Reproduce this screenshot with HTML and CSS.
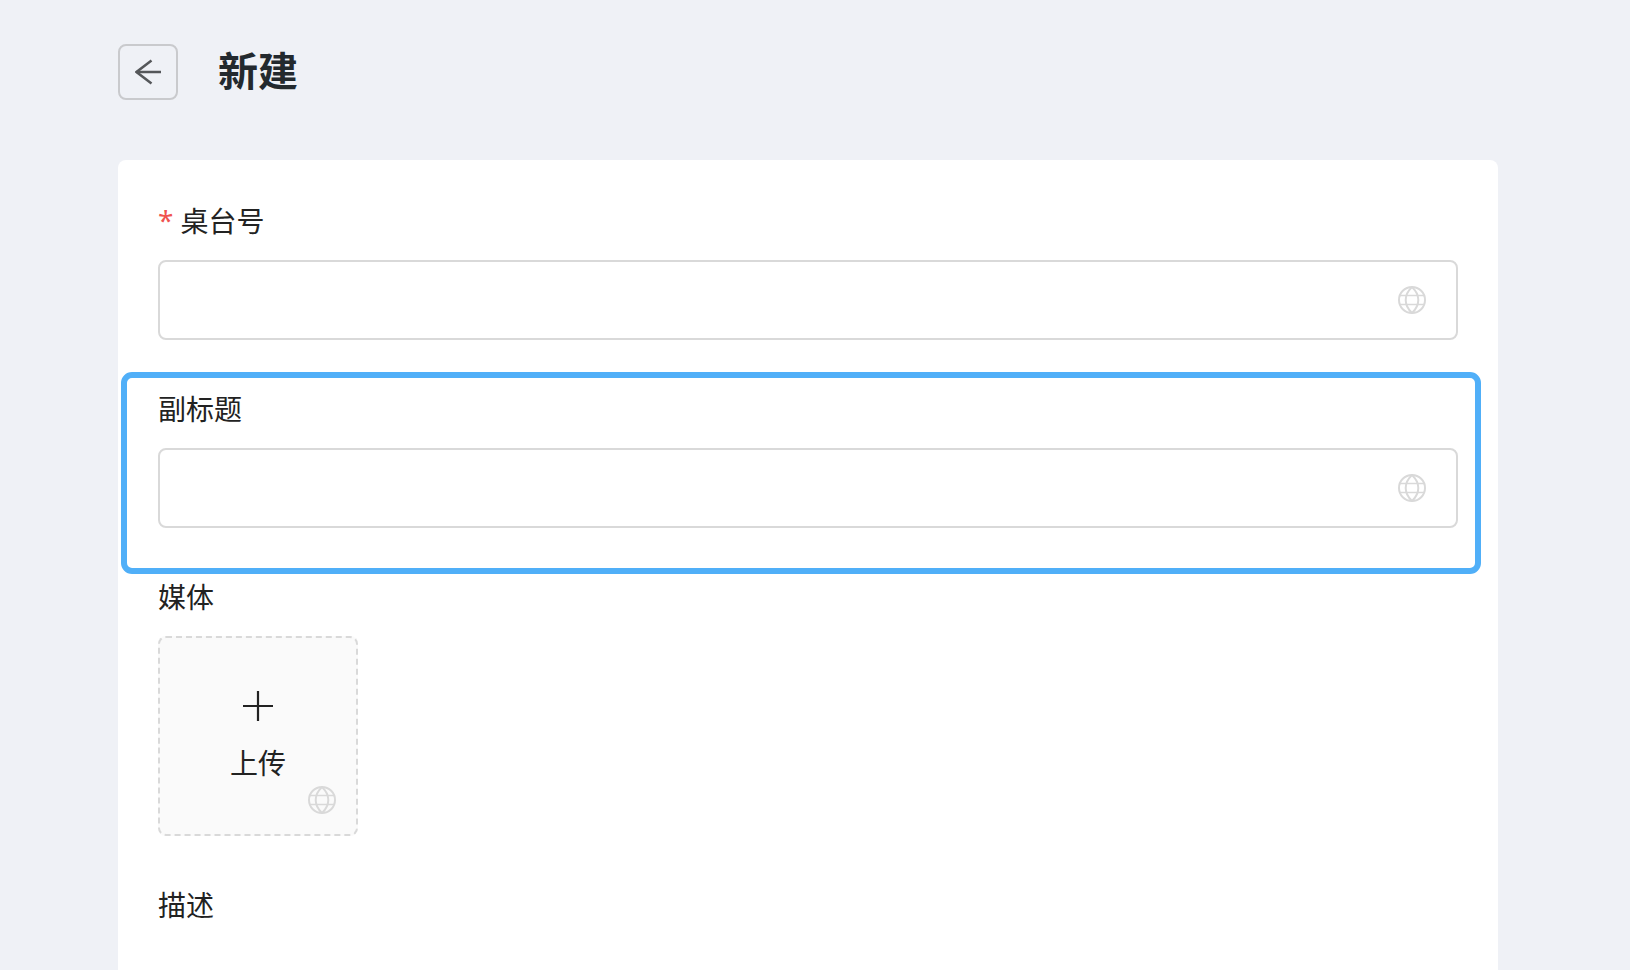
FILE: index.html
```html
<!DOCTYPE html>
<html lang="zh-CN">
<head>
<meta charset="utf-8">
<meta name="viewport" content="width=device-width, initial-scale=1">
<title>新建</title>
<link rel="stylesheet" href="styles.css">
</head>
<body>
<svg class="sprite" aria-hidden="true">
  <symbol id="globe" viewBox="0 0 28 28">
    <g fill="none" stroke="currentColor" stroke-width="2">
      <circle cx="14" cy="14" r="13"/>
      <path d="M14 1C9.800 5 7.700 9.500 7.700 14S9.800 23 14 27C18.200 23 20.300 18.500 20.300 14S18.200 5 14 1Z"/>
      <path stroke-width="1.700" d="M1.800 9.500H26.200M1.800 18.500H26.200"/>
    </g>
  </symbol>
</svg>
<div class="page">
  <header class="page-header">
    <button class="back" type="button" aria-label="返回">
      <svg class="back-icon" viewBox="0 0 26 26" fill="none" stroke="currentColor" stroke-width="2.500"><path d="M26 13H1.500"/><path d="M16.500 1.500L1.500 13L16.500 24.500"/></svg>
    </button>
    <h1 class="title">新建</h1>
  </header>
  <main class="card">
    <form class="form">
      <div class="field">
        <label class="label required" for="table-no">桌台号</label>
        <div class="control">
          <input class="input" id="table-no" type="text" required>
          <svg class="globe"><use href="#globe"/></svg>
        </div>
      </div>
      <div class="field highlighted">
        <label class="label" for="subtitle">副标题</label>
        <div class="control">
          <input class="input" id="subtitle" type="text">
          <svg class="globe"><use href="#globe"/></svg>
        </div>
      </div>
      <div class="field">
        <span class="label" id="media-label">媒体</span>
        <button class="upload" type="button" aria-describedby="media-label">
          <svg class="plus" viewBox="0 0 30 30" fill="none" stroke="currentColor" stroke-width="2.200"><path d="M0 15H30M15 0V30"/></svg>
          <span class="upload-text">上传</span>
          <svg class="globe upload-globe"><use href="#globe"/></svg>
        </button>
      </div>
      <div class="field">
        <span class="label">描述</span>
      </div>
    </form>
  </main>
</div>
</body>
</html>
```
FILE: styles.css
```css
* {
  box-sizing: border-box;
}

body {
  margin: 0;
  background: #eff1f6;
  color: #222;
  font-family: "Noto Sans CJK SC", sans-serif;
  font-size: 28px;
  line-height: 42px;
}

.sprite {
  position: absolute;
  width: 0;
  height: 0;
}

.page {
  display: flex;
  flex-direction: column;
  min-height: 100vh;
  padding: 44px 132px 0 118px;
}

.page-header {
  display: flex;
  align-items: flex-start;
  gap: 40px;
  margin-bottom: 60px;
}

.back {
  display: flex;
  align-items: center;
  justify-content: center;
  width: 60px;
  height: 56px;
  padding: 0;
  border: 2px solid #c9cacd;
  border-radius: 8px;
  background: transparent;
  color: #55575a;
}

.back-icon {
  width: 26px;
  height: 26px;
}

.title {
  margin: 0;
  color: #23292e;
  font-size: 40px;
  font-weight: 700;
  line-height: 50px;
}

.card {
  flex: 1;
  padding: 40px 40px 0;
  border-radius: 8px 8px 0 0;
  background: #fff;
}

.form {
  display: flex;
  flex-direction: column;
  gap: 48px;
}

.field {
  display: flex;
  flex-direction: column;
  align-items: flex-start;
  gap: 20px;
}

.label {
  display: flex;
  gap: 7px;
  line-height: 40px;
}

.required::before {
  content: "*";
  color: #f0524f;
  font-family: "Noto Sans", sans-serif;
}

.control {
  position: relative;
  width: 100%;
}

.input {
  display: block;
  width: 100%;
  height: 80px;
  padding: 16px 72px 16px 24px;
  border: 2px solid #d9d9d9;
  border-radius: 8px;
  background: #fff;
  color: inherit;
  font: inherit;
}

.globe {
  position: absolute;
  top: 26px;
  right: 32px;
  width: 28px;
  height: 28px;
  color: #d9d9d9;
}

.highlighted {
  position: relative;
}

.highlighted::after {
  content: "";
  position: absolute;
  inset: -16px -23px -46px -37px;
  border: 6px solid #50aff8;
  border-radius: 11px;
  pointer-events: none;
}

.upload {
  position: relative;
  display: flex;
  flex-direction: column;
  align-items: center;
  justify-content: center;
  gap: 20px;
  width: 200px;
  height: 200px;
  padding: 2px 0 0;
  border: 2px dashed #d9d9d9;
  border-radius: 8px;
  background: #fafafa;
  color: #222;
  font: inherit;
}

.plus {
  width: 30px;
  height: 30px;
}

.upload-globe {
  top: auto;
  right: 20px;
  bottom: 20px;
}
```
